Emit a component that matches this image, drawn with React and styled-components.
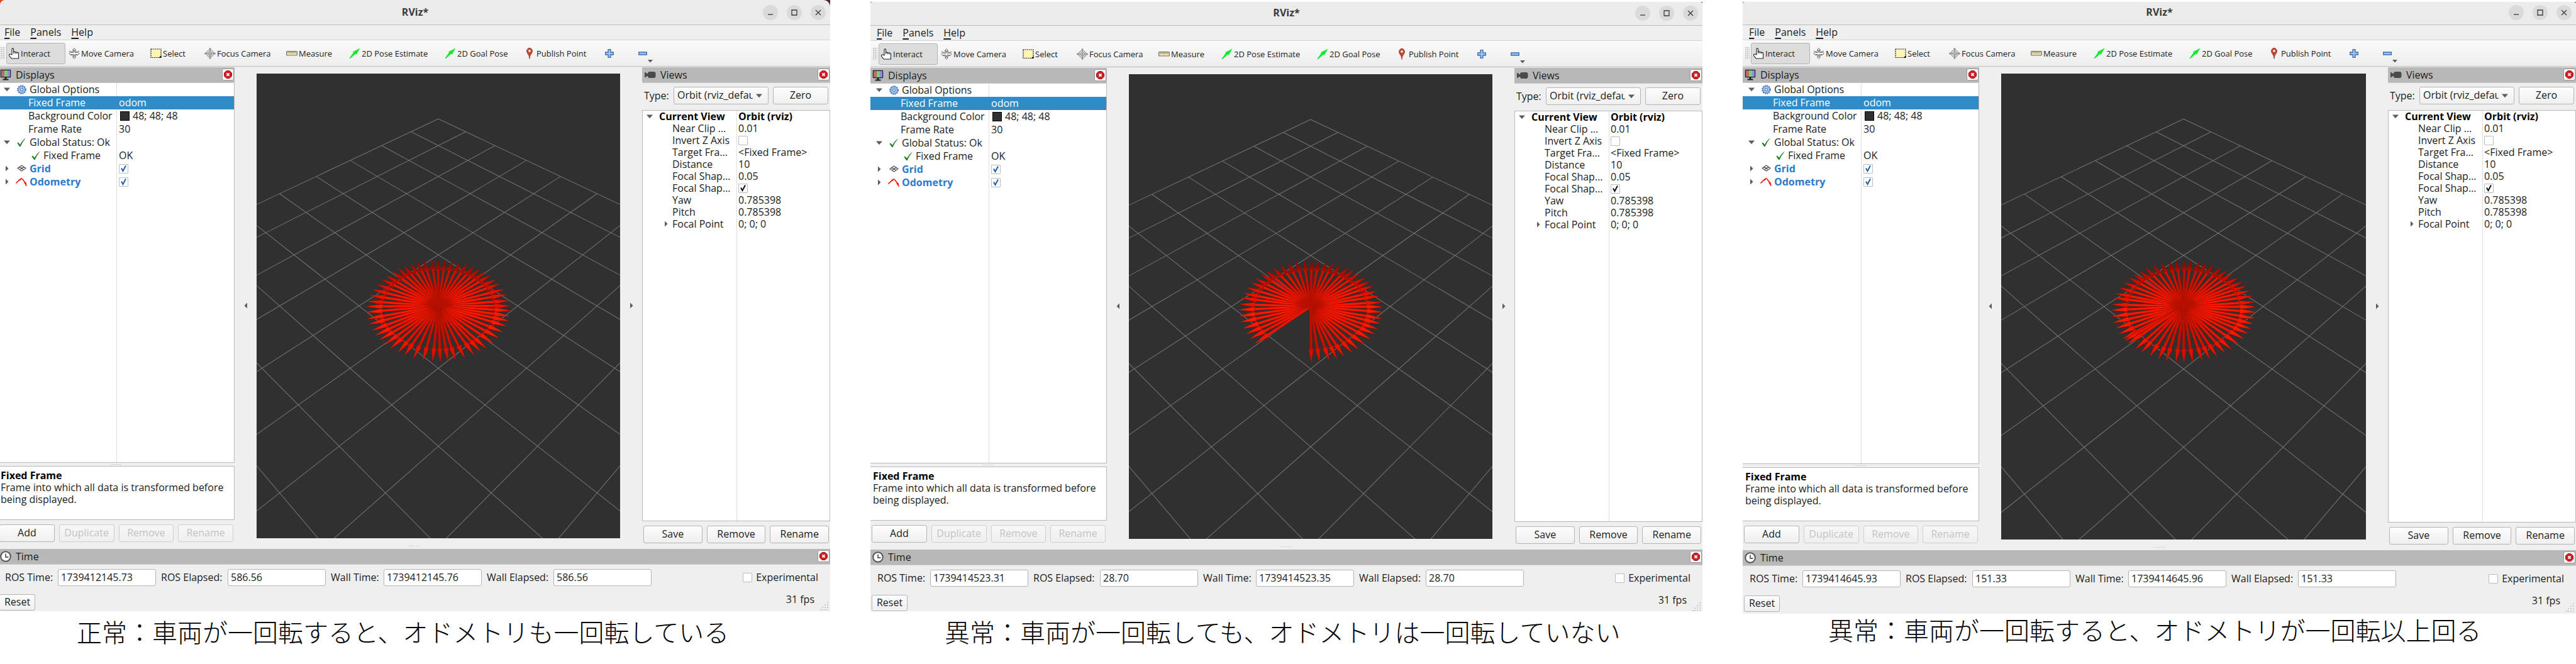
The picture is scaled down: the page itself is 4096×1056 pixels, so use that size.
import React from "react";
import styled, { createGlobalStyle, css } from "styled-components";

const GlobalStyle = createGlobalStyle`
  * { box-sizing: border-box; }
  body { margin: 0; background: #fff; color: #1b1b1b; font: 16px/19px "Open Sans", "Noto Sans", sans-serif; }
  button, input, select { font: inherit; color: inherit; margin: 0; }
`;

/* ---------- page ---------- */

const Page = styled.main`
  display: grid;
  grid-template-columns: 1320fr 1323fr 1325fr;
  column-gap: 64px;
  min-height: 100vh;
`;
const Column = styled.section`
  display: flex;
  flex-direction: column;
  min-width: 0;
  padding-top: ${(p) => p.$top}px;
`;
const Caption = styled.h2`
  margin: 0;
  padding: ${(p) => (p.$tight ? "5px 0 35px" : "12px 0 32px")};
  padding-left: ${(p) => p.$indent}px;
  font: 300 40px/40px "Noto Sans CJK JP", sans-serif;
  color: #000;
  white-space: nowrap;
`;
const Frame = styled.div`
  flex: 1;
  display: flex;
  flex-direction: column;
  overflow: hidden;
  background: #efefef;
`;
const FrameInner = styled.div`
  flex: 1;
  display: flex;
  flex-direction: column;
  margin-left: ${(p) => (p.$cut ? "-3px" : "0")};
`;

/* ---------- title, menu, tools ---------- */

const TitleBack = styled.div`
  background: linear-gradient(90deg, #d9431c 50%, #5a1a3f 50%);
`;
const TitleBar = styled.header`
  display: grid;
  grid-template-columns: 1fr auto 1fr;
  align-items: end;
  height: ${(p) => p.$height}px;
  padding: 0 7px 7px;
  background: #ebebeb;
  border-bottom: 1px solid #bdbdbd;
  border-radius: ${(p) => (p.$cut ? "8px 11px 0 0" : "3px 3px 0 0")};
`;
const Title = styled.h1`
  grid-column: 2;
  margin: 0;
  padding-bottom: 3px;
  font-size: 16px;
  line-height: 20px;
  font-weight: 700;
  color: #3a3a3a;
`;
const WindowButtons = styled.div`
  display: flex;
  justify-content: flex-end;
  gap: 14px;
`;
const RoundButton = styled.button`
  display: grid;
  place-items: center;
  width: 24px;
  height: 24px;
  padding: 0;
  border: 0;
  border-radius: 50%;
  background: #dadada;
`;
const MenuBar = styled.nav`
  display: flex;
  gap: 14px;
  height: 24px;
  padding: 1px 9px 0;
  border-bottom: 1px solid #d2d2d2;
`;
const MenuItem = styled.button`
  padding: 0 1px 2px;
  border: 0;
  background: none;
  line-height: 20px;
  u { text-underline-offset: 3px; text-decoration-thickness: 2px; }
`;
const ToolBar = styled.div`
  display: flex;
  align-items: center;
  gap: 2px;
  height: 42px;
  padding-left: 4px;
  background: linear-gradient(#fafafa, #ededed);
  border-bottom: 1px solid #bcbcbc;
`;
const Handle = styled.span`
  width: 7px;
  height: 19px;
  background: radial-gradient(circle at 1px 1px, #c4c4c4 1px, transparent 1px) 0 0 / 3px 3px;
`;
const Tool = styled.button`
  display: flex;
  align-items: center;
  gap: 2px;
  flex: none;
  width: ${(p) => p.$width}px;
  height: 34px;
  padding: 0 2px;
  border: 1px solid ${(p) => (p.$active ? "#b5b5b5" : "transparent")};
  border-radius: 3px;
  background: ${(p) => (p.$active ? "#dcdcdc" : "none")};
  font-size: 13px;
  line-height: 18px;
  white-space: nowrap;
`;
const IconTool = styled(Tool)`
  gap: 1px;
  padding-left: 11px;
  svg:nth-child(2) { align-self: flex-end; }
`;

/* ---------- docks ---------- */

const Main = styled.div`
  flex: 1;
  display: grid;
  grid-template-columns: 376px 35px minmax(0, 1fr) 35px 299px;
  grid-template-rows: minmax(0, 1fr);
  padding-top: 1px;
`;
const Dock = styled.section`
  display: flex;
  flex-direction: column;
  padding-bottom: ${(p) => (p.$lifted ? "2px" : "0")};
`;
const DockHeader = styled.header`
  display: flex;
  align-items: center;
  gap: 7px;
  height: 25px;
  padding: 0 1px 0 3px;
  background: #b8b8b8;
  border-bottom: 1px solid #c9c9c9;
`;
const DockTitle = styled.h3`
  flex: 1;
  margin: 0;
  padding-bottom: 1px;
  font-size: 16px;
  line-height: 22px;
  font-weight: 400;
`;
const CloseButton = styled.button`
  display: grid;
  place-items: center;
  width: 19px;
  height: 19px;
  padding: 0;
  border: 1px solid #9b9b9b;
  border-radius: 3px;
  background: #fbfbfb;
  margin-bottom: 2px;
`;
const Gutter = styled.div`
  display: grid;
  place-items: center;
`;
const Splitter = styled.div`
  display: grid;
  place-items: center;
  height: ${(p) => p.$size}px;
`;
const Dots = styled.span`
  width: 18px;
  height: 1px;
  background: linear-gradient(90deg, #b0b0b0 1px, transparent 1px) 0 0 / 3px 1px;
`;
const View = styled.div`
  margin: 10px 0 8px;
  background: #303030;
  overflow: hidden;
  svg { display: block; width: 100%; height: 100%; }
`;

/* ---------- property trees ---------- */

const TreeBox = styled.div`
  flex: 1;
  border: solid #b9b9b9;
  border-width: ${(p) => (p.$framed ? "1px" : "0 1px 1px 0")};
  background: linear-gradient(#dedede, #dedede) ${(p) => p.$split}px 0 / 1px 100% no-repeat #fff;
`;
const Tree = styled.table`
  width: 100%;
  border-collapse: collapse;
  table-layout: fixed;
  td { padding: 0; }
  td:first-child { width: ${(p) => p.$split}px; }
`;
const Row = styled.tr`
  height: ${(p) => p.$height}px;
  font-weight: ${(p) => (p.$tone ? 700 : 400)};
  color: ${(p) => (p.$tone === "link" ? "#2a7bcb" : p.$tone === "strong" ? "#000" : "inherit")};
  ${(p) => p.$selected && css`background: #308cc6; color: #fff;`}
`;
const Cell = styled.div`
  display: flex;
  align-items: center;
  padding-left: ${(p) => p.$indent}px;
  padding-bottom: 1px;
  line-height: 18px;
  white-space: nowrap;
`;
const Slot = styled.span`
  flex: none;
  display: grid;
  place-items: center;
  width: ${(p) => p.$width}px;
`;
const Swatch = styled.span`
  width: 15px;
  height: 15px;
  margin: 0 5px 0 2px;
  border: 1px solid #000;
  background: #303030;
`;
const TickBox = styled.span`
  flex: none;
  display: inline-grid;
  place-items: center;
  width: 15px;
  height: 15px;
  input { grid-area: 1 / 1; width: 15px; height: 15px; appearance: none; border: 1px solid #bcbcbc; border-radius: 1px; background: #fff; }
  svg { grid-area: 1 / 1; pointer-events: none; }
`;

/* ---------- controls ---------- */

const Button = styled.button`
  flex: ${(p) => (p.$fixed ? "none" : "1 1 0")};
  width: ${(p) => (p.$fixed ? p.$fixed + "px" : "auto")};
  height: ${(p) => (p.$low ? 26 : 28)}px;
  min-width: 0;
  padding: 0 0 2px;
  border: 1px solid #b4b4b4;
  border-radius: 3px;
  background: linear-gradient(#fdfdfd, #efefef);
  &:disabled { color: #c3c3c3; border-color: #cfcfcf; background: linear-gradient(#f7f7f7, #efefef); }
`;
const ButtonRow = styled.div`
  display: flex;
  gap: 7px;
  padding: 7px 2px 0;
`;
const Help = styled.div`
  height: 86px;
  padding: 5px 4px;
  border: solid #b9b9b9;
  border-width: 1px 1px 1px 0;
  background: #fff;
  p { margin: 0; }
  strong { color: #000; }
`;
const TypeRow = styled.div`
  display: flex;
  align-items: center;
  padding: 6px 3px 9px 3px;
`;
const TypeLabel = styled.label`
  width: 47px;
`;
const SelectWrap = styled.div`
  flex: 1;
  display: grid;
  align-items: center;
  margin-right: 7px;
  select { grid-area: 1 / 1; width: 100%; min-width: 0; height: 28px; padding: 0 24px 2px 5px; appearance: none; border: 1px solid #b4b4b4; border-radius: 3px; background: linear-gradient(#fdfdfd, #efefef); }
  svg { grid-area: 1 / 1; justify-self: end; margin-right: 10px; pointer-events: none; }
`;
const TimeRow = styled.div`
  display: flex;
  align-items: center;
  gap: 8px;
  padding: 7px 19px 13px 11px;
`;
const TimeLabel = styled.label`
  flex: none;
  width: ${(p) => p.$width}px;
  white-space: nowrap;
`;
const TimeInput = styled.input`
  width: 156px;
  height: 27px;
  padding: 0 4px 2px;
  border: 1px solid #b4b4b4;
  border-radius: 3px;
  background: #fff;
`;
const Experimental = styled.label`
  display: flex;
  align-items: center;
  gap: 6px;
  margin-left: auto;
`;
const Status = styled.footer`
  display: flex;
  justify-content: space-between;
  align-items: flex-start;
  padding: 0 2px ${(p) => p.$bottom}px;
`;
const Rate = styled.div`
  display: flex;
  align-items: flex-end;
  gap: 9px;
  height: 26px;
  span { align-self: flex-start; line-height: 17px; }
`;

/* ---------- icons ---------- */

const ArrowDown = ({ size = 8 }) => (
  <svg width={size} height={size} viewBox="0 0 8 8"><path d="M0 2h8L4 6.5z" fill="#5c5c5c" /></svg>
);
const ArrowRight = () => (
  <svg width="8" height="10" viewBox="0 0 8 10"><path d="M2 0.5v9L6.5 5z" fill="#5c5c5c" /></svg>
);
const ArrowLeft = () => (
  <svg width="8" height="10" viewBox="0 0 8 10"><path d="M6 0.5v9L1.5 5z" fill="#5c5c5c" /></svg>
);
const Tick = ({ color }) => (
  <svg width="11" height="12" viewBox="0 0 11 12"><path d="M2 5.5 4.5 10 9 1.5" fill="none" stroke={color} strokeWidth="2" /></svg>
);
const Cross = () => (
  <svg width="13" height="13" viewBox="0 0 13 13">
    <path d="M4 .5h5L12.500 4v5L9 12.500H4L.5 9V4z" fill="#cf1f25" stroke="#a81318" />
    <path d="M4.500 4.500l4 4m0-4l-4 4" stroke="#fff" strokeWidth="1.800" />
  </svg>
);

const icons = {
  hand: (
    <path d="M6 11V2.200a1.300 1.300 0 0 1 2.600 0V6.500q2-.9 2.700.5 1.800-.8 2.500.5 2.200-.6 2.700 1V17H5.200L1.600 12.500Q1 9.500 3.500 10zM8.600 6.500V9M11.300 7v2.200M13.800 7.500v2" fill="#fff" stroke="#222" strokeWidth="1.100" />
  ),
  move: (
    <g fill="#fff" stroke="#666" strokeWidth="1">
      <path d="M9 .7 11.500 3.500H10v4h4V6l3.300 3-3.300 3v-1.500h-4v4h1.500L9 17.300 6.500 14.500H8v-4H4V12L.7 9 4 6v1.500h4v-4H6.500z" />
      <path d="M1 5l3 1.500M17 5l-3 1.500M4.500 6.500Q9 3 13.500 6.500M4 11q5 4 10 0" fill="none" />
    </g>
  ),
  select: (
    <g>
      <rect x="1" y="2" width="16" height="13.500" fill="#fdf5b4" stroke="#222" strokeWidth="1.200" strokeDasharray="2 1" />
      <path d="M17.500 12v4h-4z" fill="#000" />
    </g>
  ),
  focus: (
    <g fill="none" stroke="#8a8a8a" strokeWidth="1.200">
      <circle cx="9" cy="9" r="5.500" /><circle cx="9" cy="9" r="3" />
      <path d="M9 0.500v17M.5 9h17M7.500 2.500 9 .5l1.500 2M7.500 15.500l1.500 2 1.500-2M2.500 7.500.5 9l2 1.500M15.500 7.500l2 1.500-2 1.500" />
    </g>
  ),
  ruler: (
    <g>
      <rect x=".6" y="5.500" width="16.800" height="6.500" rx="1" fill="#e9e0b4" stroke="#77705a" strokeWidth="1.200" />
      <path d="M3 6v2.500M5 6v2.500M7 6v2.500M9 6v3.500M11 6v2.500M13 6v2.500M15 6v2.500" stroke="#77705a" strokeWidth=".8" />
    </g>
  ),
  pose: <path d="M.5 16.500 7 7.500 6 6.500 17.500.5 11.500 11l-1-1.500L2 17z" fill="#0bea2f" />,
  pin: (
    <g>
      <path d="M9 17.500Q8.500 12 5.500 8.500A4.500 5 0 1 1 12.500 8.500Q9.500 12 9 17.500z" fill="#c04a30" stroke="#8c3220" strokeWidth=".7" />
      <circle cx="9" cy="5" r="1.800" fill="#fff" />
    </g>
  ),
};
const ToolIcon = ({ name }) => (
  <svg width="18" height="18" viewBox="0 0 18 18">{icons[name]}</svg>
);
const Plus = () => (
  <svg width="14" height="14" viewBox="0 0 14 14"><path d="M5 .7h4V5h4.300v4H9v4.300H5V9H.7V5H5z" fill="#a4c2e8" stroke="#3b6fb3" strokeWidth="1.300" /></svg>
);
const Minus = () => (
  <svg width="14" height="14" viewBox="0 0 14 14"><path d="M.7 5h12.600v4H.7z" fill="#a4c2e8" stroke="#3b6fb3" strokeWidth="1.300" /></svg>
);
const Monitor = () => (
  <svg width="18" height="18" viewBox="0 0 18 18">
    <rect x=".8" y=".8" width="16.400" height="12.400" rx="1" fill="#222" />
    <path d="M2 2h5v10H2z" fill="#bd6a6a" /><path d="M7 2h5v10H7z" fill="#7ecb84" /><path d="M12 2h4v10h-4z" fill="#8f8ce0" />
    <path d="M7.500 13h3v2.500h3V17.500h-9v-2h3z" fill="#222" />
  </svg>
);
const Camera = () => (
  <svg width="19" height="12" viewBox="0 0 19 12"><path d="M1 1.500 6 4.500V4q0-3 3-3h6.500q3 0 3 3v4q0 3-3 3H9Q6 11 6 8v-.5L1 10.500z" fill="#4a4a4a" /></svg>
);
const Clock = () => (
  <svg width="18" height="18" viewBox="0 0 18 18">
    <circle cx="9" cy="9" r="7.800" fill="#fff" stroke="#555" strokeWidth="2" />
    <path d="M9 4.500V10h4.500" fill="none" stroke="#333" strokeWidth="1.400" />
  </svg>
);
const Gear = () => (
  <svg width="15" height="15" viewBox="0 0 15 15">
    <circle cx="7.500" cy="7.500" r="6.300" fill="none" stroke="#3f74bd" strokeWidth="2" strokeDasharray="2.200 1.100" />
    <circle cx="7.500" cy="7.500" r="5.500" fill="#9dbde6" stroke="#4c7fc4" strokeWidth=".8" />
    <circle cx="7.500" cy="7.500" r="2" fill="#dfe9f7" stroke="#3f74bd" strokeWidth="1" />
  </svg>
);
const Check = () => (
  <svg width="15" height="15" viewBox="0 0 15 15"><path d="M.5 8.500 2 7.500 5 11Q8.500 4 14 .5 9 6 5.500 14H4z" fill="#1c7a1f" /></svg>
);
const GridIcon = () => (
  <svg width="15" height="12" viewBox="0 0 15 12"><path d="M7.500 1 14 5.500 7.500 10 1 5.500zM4.200 3.200l6.600 4.500M10.800 3.200 4.200 7.700" fill="none" stroke="#555" strokeWidth="1.300" /></svg>
);
const OdomIcon = () => (
  <svg width="18" height="15" viewBox="0 0 18 15"><path d="M.5 9.500 6 4 10 1.500M10.500 2.500l4.500 6 2 5" fill="none" stroke="#f01b0b" strokeWidth="1.600" /><path d="M5 3.500 11 .5 7 5.500zM13 8.500l3.500-1 1 7z" fill="#f01b0b" /></svg>
);
const Grip = () => (
  <svg width="14" height="14" viewBox="0 0 14 14">
    {[[12, 1], [8, 5], [12, 5], [4, 9], [8, 9], [12, 9], [1, 13], [4, 13], [8, 13], [12, 13]].map(([x, y]) => (
      <circle key={x + "-" + y} cx={x} cy={y} r=".9" fill="#b9b9b9" />
    ))}
  </svg>
);

/* ---------- 3D view ---------- */

const VIEW = { width: 732, height: 935, focal: 1129, distance: 10, tilt: Math.SQRT1_2 };

// u runs to the right and v away from the camera, both on the ground, in metres
function project(u, v) {
  const depth = VIEW.distance + v * VIEW.tilt;
  const scale = VIEW.focal / depth;
  return { x: VIEW.width / 2 + u * scale, y: VIEW.height / 2 - v * VIEW.tilt * scale, scale };
}

function headingOf([px, py], [ox, oy], [sx, sy]) {
  const x = (px - ox) / sx;
  const y = (oy - py) / sy;
  const rise = (VIEW.distance * y) / (VIEW.focal - y);
  return Math.atan2(rise / VIEW.tilt, (x * (VIEW.distance + rise)) / VIEW.focal);
}

const gridLines = [];
for (let i = -5; i <= 5; i += 1) {
  const turn = (a, b) => project((a - b) * VIEW.tilt, (a + b) * VIEW.tilt);
  gridLines.push([turn(i, -5), turn(i, 5)], [turn(-5, i), turn(5, i)]);
}

function Arrow({ heading }) {
  const c = Math.cos(heading);
  const s = Math.sin(heading);
  const from = project(0, 0);
  const neck = project(c, s);
  const tip = project(1.28 * c, 1.28 * s);
  const len = Math.hypot(tip.x - from.x, tip.y - from.y);
  const nx = -(tip.y - from.y) / len;
  const ny = (tip.x - from.x) / len;
  const side = Math.abs(c);
  const near = s < 0;
  const shaft = `rgb(${Math.round(188 + 67 * side)}, ${Math.round(16 + 8 * side)}, 0)`;
  const head = near
    ? `rgb(${Math.round(205 + 50 * side)}, ${Math.round(18 + 8 * side)}, 0)`
    : `rgb(${Math.round(140 + 95 * side * side)}, ${Math.round(12 + 8 * side)}, 0)`;
  const r0 = 0.025 * from.scale;
  const r1 = 0.025 * neck.scale;
  const h = 0.05 * neck.scale;
  const pts = (list) => list.map(([x, y]) => `${x.toFixed(2)},${y.toFixed(2)}`).join(" ");
  const body = (k) => pts([
    [from.x + nx * r0 * k, from.y + ny * r0 * k],
    [neck.x + nx * r1 * k, neck.y + ny * r1 * k],
    [neck.x - nx * r1 * k, neck.y - ny * r1 * k],
    [from.x - nx * r0 * k, from.y - ny * r0 * k],
  ]);
  const cone = (k) => pts([
    [neck.x + nx * h * k, neck.y + ny * h * k],
    [tip.x, tip.y],
    [neck.x - nx * h * k, neck.y - ny * h * k],
  ]);
  const headShape = (
    <g>
      <polygon points={cone(1)} fill="#8c0d00" />
      <polygon points={cone(0.75)} fill={head} />
      {!near && (
        <ellipse cx={neck.x} cy={neck.y} rx={h} ry={h * 0.55 * s} fill="#8a0c00" stroke="#c41200" strokeWidth="1" transform={`rotate(${(Math.atan2(ny, nx) * 180) / Math.PI} ${neck.x} ${neck.y})`} />
      )}
    </g>
  );
  return (
    <g>
      {!near && headShape}
      <polygon points={body(1)} fill="#960e00" />
      <polygon points={body(0.7)} fill={shaft} />
      {near && headShape}
    </g>
  );
}

function Scene({ id, trace }) {
  const headings = trace.tips
    .map((t) => headingOf(t, trace.origin, trace.scale))
    .sort((a, b) => Math.sin(b) - Math.sin(a));
  return (
    <svg viewBox={`0 0 ${VIEW.width} ${VIEW.height}`} preserveAspectRatio="xMidYMid slice" role="img" aria-label="3D view">
      <defs>
        <radialGradient id={id}>
          <stop offset="0" stopColor="#b80f00" />
          <stop offset=".5" stopColor="#b80f00" stopOpacity=".85" />
          <stop offset="1" stopColor="#b80f00" stopOpacity="0" />
        </radialGradient>
      </defs>
      {gridLines.map(([a, b], i) => (
        <line key={i} x1={a.x} y1={a.y} x2={b.x} y2={b.y} stroke="#747474" strokeWidth="1.300" />
      ))}
      {headings.map((h, i) => <Arrow key={i} heading={h} />)}
      <ellipse cx={VIEW.width / 2} cy={VIEW.height / 2 - 6} rx="34" ry="14" fill={`url(#${id})`} />
    </svg>
  );
}

const fullTurn = {
  origin: [769, 785], scale: [2.01, 1.616],
  tips: [[768, 632], [796, 636], [826, 638], [857, 642], [886, 648], [914, 655], [937, 664], [958, 675], [980, 685], [1003, 699], [1013, 714], [1034, 731], [1047, 748], [1054, 768], [1060, 785], [1060, 801], [1058, 818], [1054, 834], [1047, 851], [1035, 872], [1016, 890], [991, 906], [964, 924], [941, 934], [913, 944], [876, 955], [839, 963], [808, 963], [777, 967], [746, 965], [707, 962], [669, 955], [632, 947], [603, 939], [573, 925], [552, 911], [530, 896], [511, 882], [502, 864], [486, 845], [481, 827], [484, 805], [478, 787], [480, 770], [490, 750], [504, 732], [521, 715], [541, 699], [557, 686], [584, 673], [608, 664], [631, 656], [658, 648], [684, 642], [710, 638], [741, 634]],
};
const shortTurn = {
  origin: [717, 410], scale: [3, 3],
  tips: [[721, 748], [771, 746], [831, 740], [876, 726], [918, 711], [968, 690], [1006, 669], [1048, 641], [1082, 608], [1106, 577], [1130, 549], [1141, 514], [1152, 484], [1152, 444], [1154, 412], [1145, 384], [1132, 346], [1118, 318], [1098, 284], [1069, 262], [1047, 237], [1010, 211], [976, 190], [942, 176], [897, 157], [851, 148], [811, 141], [764, 135], [724, 130], [677, 134], [629, 137], [583, 147], [535, 157], [491, 177], [449, 196], [420, 216], [382, 240], [360, 265], [332, 296], [307, 329], [299, 358], [284, 396], [280, 430], [284, 468], [291, 505], [307, 543], [323, 577], [346, 607], [378, 635]],
};
const longTurn = {
  origin: [796, 220], scale: [2.529, 1.876],
  tips: [[800, 42], [834, 48], [876, 51], [908, 57], [945, 63], [985, 74], [1012, 86], [1042, 97], [1072, 112], [1096, 127], [1116, 142], [1134, 160], [1146, 180], [1155, 203], [1164, 221], [1158, 241], [1162, 265], [1152, 286], [1142, 305], [1123, 322], [1104, 342], [1075, 362], [1039, 382], [1005, 393], [965, 407], [929, 417], [893, 427], [842, 427], [798, 431], [757, 432], [708, 424], [669, 418], [624, 408], [578, 396], [549, 382], [510, 361], [495, 350], [484, 343], [466, 324], [446, 303], [435, 281], [428, 258], [425, 234], [428, 212], [441, 187], [450, 170], [470, 149], [492, 129], [519, 111], [544, 98], [573, 86], [604, 74], [641, 63], [681, 55], [722, 48], [759, 47]],
};

/* ---------- data ---------- */

const tools = [
  ["hand", "Interact", 94],
  ["move", "Move Camera", 128],
  ["select", "Select", 84],
  ["focus", "Focus Camera", 128],
  ["ruler", "Measure", 98],
  ["pose", "2D Pose Estimate", 150],
  ["pose", "2D Goal Pose", 124],
  ["pin", "Publish Point", 118],
];

const displays = [
  { level: 0, open: true, icon: <Gear />, name: "Global Options" },
  { level: 1, name: "Fixed Frame", value: "odom", selected: true },
  { level: 1, name: "Background Color", value: "48; 48; 48", swatch: true },
  { level: 1, name: "Frame Rate", value: "30" },
  { level: 0, open: true, icon: <Check />, name: "Global Status: Ok" },
  { level: 1, icon: <Check />, name: "Fixed Frame", value: "OK" },
  { level: 0, open: false, icon: <GridIcon />, name: "Grid", tone: "link", checked: true },
  { level: 0, open: false, icon: <OdomIcon />, name: "Odometry", tone: "link", checked: true },
];

const viewProps = [
  { name: "Near Clip …", value: "0.01" },
  { name: "Invert Z Axis", checked: false },
  { name: "Target Fra…", value: "<Fixed Frame>" },
  { name: "Distance", value: "10" },
  { name: "Focal Shap…", value: "0.05" },
  { name: "Focal Shap…", checked: true },
  { name: "Yaw", value: "0.785398" },
  { name: "Pitch", value: "0.785398" },
  { name: "Focal Point", value: "0; 0; 0", folded: true },
];

const sessions = [
  {
    id: "a", top: 0, title: 40, cut: true, bottom: 1, trace: fullTurn,
    times: ["1739412145.73", "586.56", "1739412145.76", "586.56"],
    caption: "正常：車両が一回転すると、オドメトリも一回転している", indent: 122,
  },
  {
    id: "b", top: 3, title: 38, bottom: 0, trace: shortTurn,
    times: ["1739414523.31", "28.70", "1739414523.35", "28.70"],
    caption: "異常：車両が一回転しても、オドメトリは一回転していない", indent: 118,
  },
  {
    id: "c", top: 3, title: 37, bottom: 3, trace: longTurn, tight: true,
    times: ["1739414645.93", "151.33", "1739414645.96", "151.33"],
    caption: "異常：車両が一回転すると、オドメトリが一回転以上回る", indent: 136,
  },
];

/* ---------- parts ---------- */

const CheckField = ({ checked, color = "#1f5fa8", ...rest }) => (
  <TickBox>
    <input type="checkbox" defaultChecked={checked} {...rest} />
    {checked && <Tick color={color} />}
  </TickBox>
);

const Header = ({ icon, children }) => (
  <DockHeader>
    {icon}
    <DockTitle>{children}</DockTitle>
    <CloseButton aria-label={`Close ${children}`}><Cross /></CloseButton>
  </DockHeader>
);

function DisplaysDock() {
  return (
    <Dock $lifted>
      <Header icon={<Monitor />}>Displays</Header>
      <TreeBox $split={188}>
        <Tree $split={189}>
          <tbody>
            {displays.map((d, i) => (
              <Row key={i} $height={21} $selected={d.selected} $tone={d.tone}>
                <td>
                  <Cell $indent={d.level ? 48 : 4}>
                    {d.level === 0 && <Slot $width={20}>{d.open ? <ArrowDown size={10} /> : <ArrowRight />}</Slot>}
                    {d.icon && <Slot $width={d.level ? 24 : 26}>{d.icon}</Slot>}
                    {d.name}
                  </Cell>
                </td>
                <td>
                  <Cell $indent={3}>
                    {d.swatch && <Swatch />}
                    {d.checked && <CheckField checked aria-label={d.name} />}
                    {d.value}
                  </Cell>
                </td>
              </Row>
            ))}
          </tbody>
        </Tree>
      </TreeBox>
      <Splitter $size={5}><Dots /></Splitter>
      <Help>
        <p><strong>Fixed Frame</strong></p>
        <p>Frame into which all data is transformed before being displayed.</p>
      </Help>
      <ButtonRow>
        <Button>Add</Button>
        <Button disabled>Duplicate</Button>
        <Button disabled>Remove</Button>
        <Button disabled>Rename</Button>
      </ButtonRow>
    </Dock>
  );
}

function ViewsDock({ id }) {
  return (
    <Dock>
      <Header icon={<Camera />}>Views</Header>
      <TypeRow>
        <TypeLabel htmlFor={`type-${id}`}>Type:</TypeLabel>
        <SelectWrap>
          <select id={`type-${id}`}><option>Orbit (rviz_default_plugins)</option></select>
          <ArrowDown size={10} />
        </SelectWrap>
        <Button $fixed={88}>Zero</Button>
      </TypeRow>
      <TreeBox $framed $split={149}>
        <Tree $split={150}>
          <tbody>
            <Row $height={19} $tone="strong">
              <td><Cell $indent={2}><Slot $width={18}><ArrowDown size={10} /></Slot><Slot $width={6} />Current View</Cell></td>
              <td><Cell $indent={2}>Orbit (rviz)</Cell></td>
            </Row>
            {viewProps.map((v, i) => (
              <Row key={i} $height={19}>
                <td>
                  <Cell $indent={v.folded ? 27 : 47}>
                    {v.folded && <Slot $width={20}><ArrowRight /></Slot>}
                    {v.name}
                  </Cell>
                </td>
                <td>
                  <Cell $indent={2}>
                    {v.value || <CheckField checked={v.checked} color="#111" aria-label={v.name} />}
                  </Cell>
                </td>
              </Row>
            ))}
          </tbody>
        </Tree>
      </TreeBox>
      <ButtonRow>
        <Button>Save</Button>
        <Button>Remove</Button>
        <Button>Rename</Button>
      </ButtonRow>
    </Dock>
  );
}

const timeLabels = [["ROS Time:", 76], ["ROS Elapsed:", 98], ["Wall Time:", 76], ["Wall Elapsed:", 98]];

function RvizWindow({ session }) {
  const { id, cut, title, times, trace, bottom } = session;
  return (
    <Frame>
      <TitleBack>
        <TitleBar $height={title} $cut={cut}>
          <Title>RViz*</Title>
          <WindowButtons>
            <RoundButton aria-label="Minimize"><svg width="10" height="10"><path d="M1 8h8" stroke="#3a3a3a" strokeWidth="1.300" /></svg></RoundButton>
            <RoundButton aria-label="Maximize"><svg width="10" height="10"><path d="M1 1h8v8H1z" fill="none" stroke="#3a3a3a" strokeWidth="1.300" /></svg></RoundButton>
            <RoundButton aria-label="Close"><svg width="10" height="10"><path d="M1 1l8 8M9 1 1 9" stroke="#3a3a3a" strokeWidth="1.300" /></svg></RoundButton>
          </WindowButtons>
        </TitleBar>
      </TitleBack>
      <FrameInner $cut={cut}>
        <MenuBar>
          <MenuItem><u>F</u>ile</MenuItem>
          <MenuItem><u>P</u>anels</MenuItem>
          <MenuItem><u>H</u>elp</MenuItem>
        </MenuBar>
        <ToolBar>
          <Handle />
          {tools.map(([icon, name, width], i) => (
            <Tool key={name} $width={width} $active={i === 0}><ToolIcon name={icon} />{name}</Tool>
          ))}
          <IconTool $width={51} aria-label="Add tool"><Plus /></IconTool>
          <IconTool $width={51} aria-label="Remove tool"><Minus /><ArrowDown /></IconTool>
        </ToolBar>
        <Main>
          <DisplaysDock />
          <Gutter><ArrowLeft /></Gutter>
          <View><Scene id={`core-${id}`} trace={trace} /></View>
          <Gutter><ArrowRight /></Gutter>
          <ViewsDock id={id} />
        </Main>
        <Splitter $size={9}><Dots /></Splitter>
        <Header icon={<Clock />}>Time</Header>
        <TimeRow>
          {timeLabels.map(([label, width], i) => (
            <React.Fragment key={label}>
              <TimeLabel $width={width} htmlFor={`time-${id}-${i}`}>{label}</TimeLabel>
              <TimeInput id={`time-${id}-${i}`} readOnly value={times[i]} />
            </React.Fragment>
          ))}
          <Experimental><CheckField checked={false} />Experimental</Experimental>
        </TimeRow>
        <Status $bottom={bottom}>
          <Button $fixed={57} $low>Reset</Button>
          <Rate><span>31 fps</span><Grip /></Rate>
        </Status>
      </FrameInner>
    </Frame>
  );
}

export default function App() {
  return (
    <>
      <GlobalStyle />
      <Page>
        {sessions.map((s) => (
          <Column key={s.id} $top={s.top}>
            <RvizWindow session={s} />
            <Caption $tight={s.tight} $indent={s.indent}>{s.caption}</Caption>
          </Column>
        ))}
      </Page>
    </>
  );
}
